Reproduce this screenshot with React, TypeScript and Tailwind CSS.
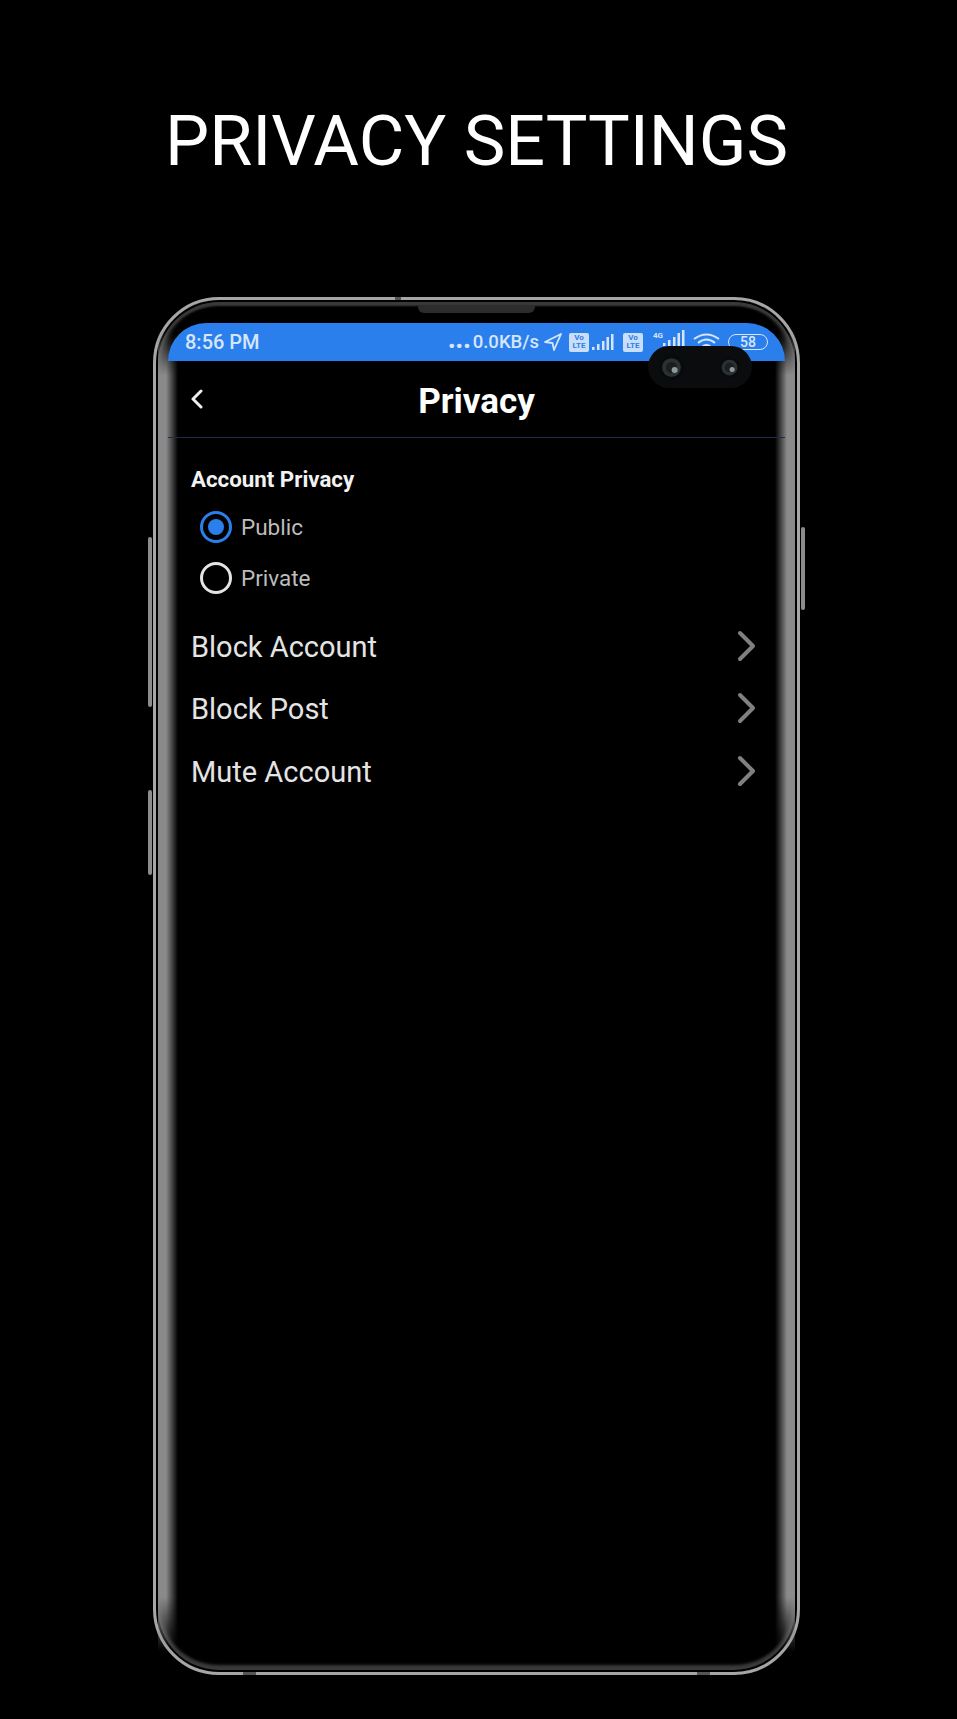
import React from "react";

const Volte = () => (
    <div className="flex flex-col items-center justify-center w-[20px] h-[19px] bg-[#c9def8] rounded-[2px] text-[#2b7fec] text-[8px] leading-[8px] font-bold">
        <span>Vo</span>
        <span>LTE</span>
    </div>
);

const Signal = ({ className }: { className?: string }) => (
    <svg className={className} width="22" height="16" viewBox="0 0 22 16" fill="#d5e6fb">
        <rect x="0" y="13" width="2.5" height="3" />
        <rect x="5" y="10" width="2.5" height="6" />
        <rect x="10" y="7" width="2.5" height="9" />
        <rect x="14.5" y="3" width="2.5" height="13" />
        <rect x="19" y="0" width="2.5" height="16" />
    </svg>
);

const Chevron = () => (
    <svg className="mb-[3px]" width="20" height="32" viewBox="0 0 20 32" fill="none" stroke="#808080" strokeWidth="4" strokeLinecap="round" strokeLinejoin="round">
        <path d="M3 3 L16 16 L3 29" />
    </svg>
);

const Lens = ({ size }: { size: number }) => (
    <svg width={size} height={size} viewBox="0 0 20 20">
        <circle cx="10" cy="10" r="10" fill="#090a0b" />
        <circle cx="10" cy="10" r="7.5" fill="#2b3133" />
        <circle cx="10" cy="10" r="4.5" fill="#1a1e20" />
        <circle cx="12.5" cy="12" r="2.4" fill="#8f989b" />
    </svg>
);

const rows = ["Block Account", "Block Post", "Mute Account"];

export default function App() {
    return (
        <div className="w-[957px] h-[1719px] bg-black overflow-hidden font-['Roboto',sans-serif] text-white">
            <h1 className="pt-[101px] pr-[4px] h-[180px] text-center text-[70px] leading-[80px] font-normal">PRIVACY SETTINGS</h1>

            <div className="relative ml-[153px] mt-[117px] w-[647px] h-[1378px] rounded-[66px] border-[3px] border-[#a6a6a6] pt-[23px] px-[12px] shadow-[inset_0_0_0_2px_#000,inset_0_6px_2px_0_#3a3a3a,inset_0_-7px_3px_0_#3a3a3a,inset_5px_0_5px_0_#555555,inset_-5px_0_5px_0_#555555]">
                {/* side bands of the frame */}
                <div className="absolute left-[2px] top-[30px] bottom-[20px] w-[20px] bg-[linear-gradient(to_right,#8a8a8a_40%,transparent)] [mask-image:linear-gradient(to_bottom,transparent,black_45px,black_calc(100%-55px),transparent)]" />
                <div className="absolute right-[2px] top-[30px] bottom-[20px] w-[20px] bg-[linear-gradient(to_left,#8a8a8a_40%,transparent)] [mask-image:linear-gradient(to_bottom,transparent,black_45px,black_calc(100%-55px),transparent)]" />

                {/* frame seams */}
                <div className="absolute left-[239px] top-[-3px] w-[6px] h-[3px] bg-[#555555]" />
                <div className="absolute left-[87px] bottom-[-3px] w-[13px] h-[3px] bg-[#555555]" />
                <div className="absolute right-[87px] bottom-[-3px] w-[13px] h-[3px] bg-[#555555]" />

                {/* side buttons */}
                <div className="absolute left-[-8px] top-[237px] w-[4px] h-[170px] rounded-full bg-[#8c8c8c]" />
                <div className="absolute left-[-8px] top-[490px] w-[4px] h-[85px] rounded-full bg-[#8c8c8c]" />
                <div className="absolute right-[-8px] top-[227px] w-[4px] h-[83px] rounded-full bg-[#8c8c8c]" />

                {/* speaker */}
                <div className="absolute left-[262px] top-[5px] w-[117px] h-[8px] rounded-b-[6px] bg-[#2c2c2c]" />

                {/* camera */}
                <div className="absolute left-[492px] top-[46px] w-[104px] h-[42px] rounded-[21px] bg-[#0b0c0d] flex items-center justify-between pl-[11px] pr-[12px] z-10">
                    <Lens size={25} />
                    <Lens size={21} />
                </div>

                {/* status bar */}
                <div className="relative flex items-center justify-between h-[38px] rounded-t-[48px] bg-[#2b7fec] pl-[17px] pr-[17px] text-[#d5e6fb] text-[20px] font-medium">
                    <span>8:56 PM</span>
                    <div className="flex items-center">
                        <span className="flex items-baseline text-[18.5px]">
                            <span className="text-[25px] leading-none font-black mr-[2px]">...</span>
                            0.0KB/s
                        </span>
                        <svg className="ml-[5px]" width="18" height="18" viewBox="0 0 18 18" fill="none" stroke="#d5e6fb" strokeWidth="1.8" strokeLinejoin="round">
                            <path d="M1 9 L17 1 L10 17 L8.5 10 Z" />
                        </svg>
                        <div className="ml-[7px]"><Volte /></div>
                        <Signal className="ml-[3px]" />
                        <div className="ml-[9px]"><Volte /></div>
                        <div className="relative ml-[10px] w-[32px] h-[20px]">
                            <span className="absolute left-0 top-0 text-[8px] leading-[8px] font-bold">4G</span>
                            <Signal className="absolute right-0 top-[-2px]" />
                        </div>
                        <svg className="ml-[8px]" width="27" height="18" viewBox="0 0 27 18" fill="none" stroke="#d5e6fb" strokeWidth="2">
                            <path d="M1 6 Q13.5 -3 26 6" />
                            <path d="M5 10 Q13.5 3 22 10" />
                            <path d="M9 14 Q13.5 10 18 14" />
                        </svg>
                        <div className="flex items-center justify-center ml-[8px] w-[40px] h-[16px] rounded-[8px] border border-[#d5e6fb] text-[14px] leading-none">58</div>
                    </div>
                </div>

                {/* header */}
                <div className="relative flex items-center justify-center h-[77px] pt-[6px] border-b border-[#1c2c44]">
                    <svg className="absolute left-[23px] top-[28px]" width="12" height="20" viewBox="0 0 12 20" fill="none" stroke="#eeeeee" strokeWidth="3" strokeLinecap="round" strokeLinejoin="round">
                        <path d="M10 2 L2 10 L10 18" />
                    </svg>
                    <span className="text-[35px] font-bold">Privacy</span>
                </div>

                {/* account privacy */}
                <div className="pl-[23px] pt-[27px]">
                    <div className="text-[22.3px] leading-[28px] font-bold text-[#f2f2f2]">Account Privacy</div>
                    <div className="flex items-center gap-[9px] ml-[9px] mt-[18px] h-[32px]">
                        <div className="flex items-center justify-center w-[32px] h-[32px] rounded-full border-[3px] border-[#2b7fec]">
                            <div className="w-[16px] h-[16px] rounded-full bg-[#2b7fec]" />
                        </div>
                        <span className="pt-[2px] text-[22.5px] text-[#bdbdbd]">Public</span>
                    </div>
                    <div className="flex items-center gap-[9px] ml-[9px] mt-[19px] h-[32px]">
                        <div className="w-[32px] h-[32px] rounded-full border-[3px] border-[#e4e4e4]" />
                        <span className="pt-[2px] text-[22.5px] text-[#bdbdbd]">Private</span>
                    </div>
                </div>

                {/* rows */}
                <div className="relative mt-[22px] pl-[23px] pr-[28px]">
                    {rows.map((r) => (
                        <div key={r} className="flex items-center justify-between h-[62.5px]">
                            <span className="text-[29px] text-[#e4e4e4]">{r}</span>
                            <Chevron />
                        </div>
                    ))}
                </div>
            </div>
        </div>
    );
}
